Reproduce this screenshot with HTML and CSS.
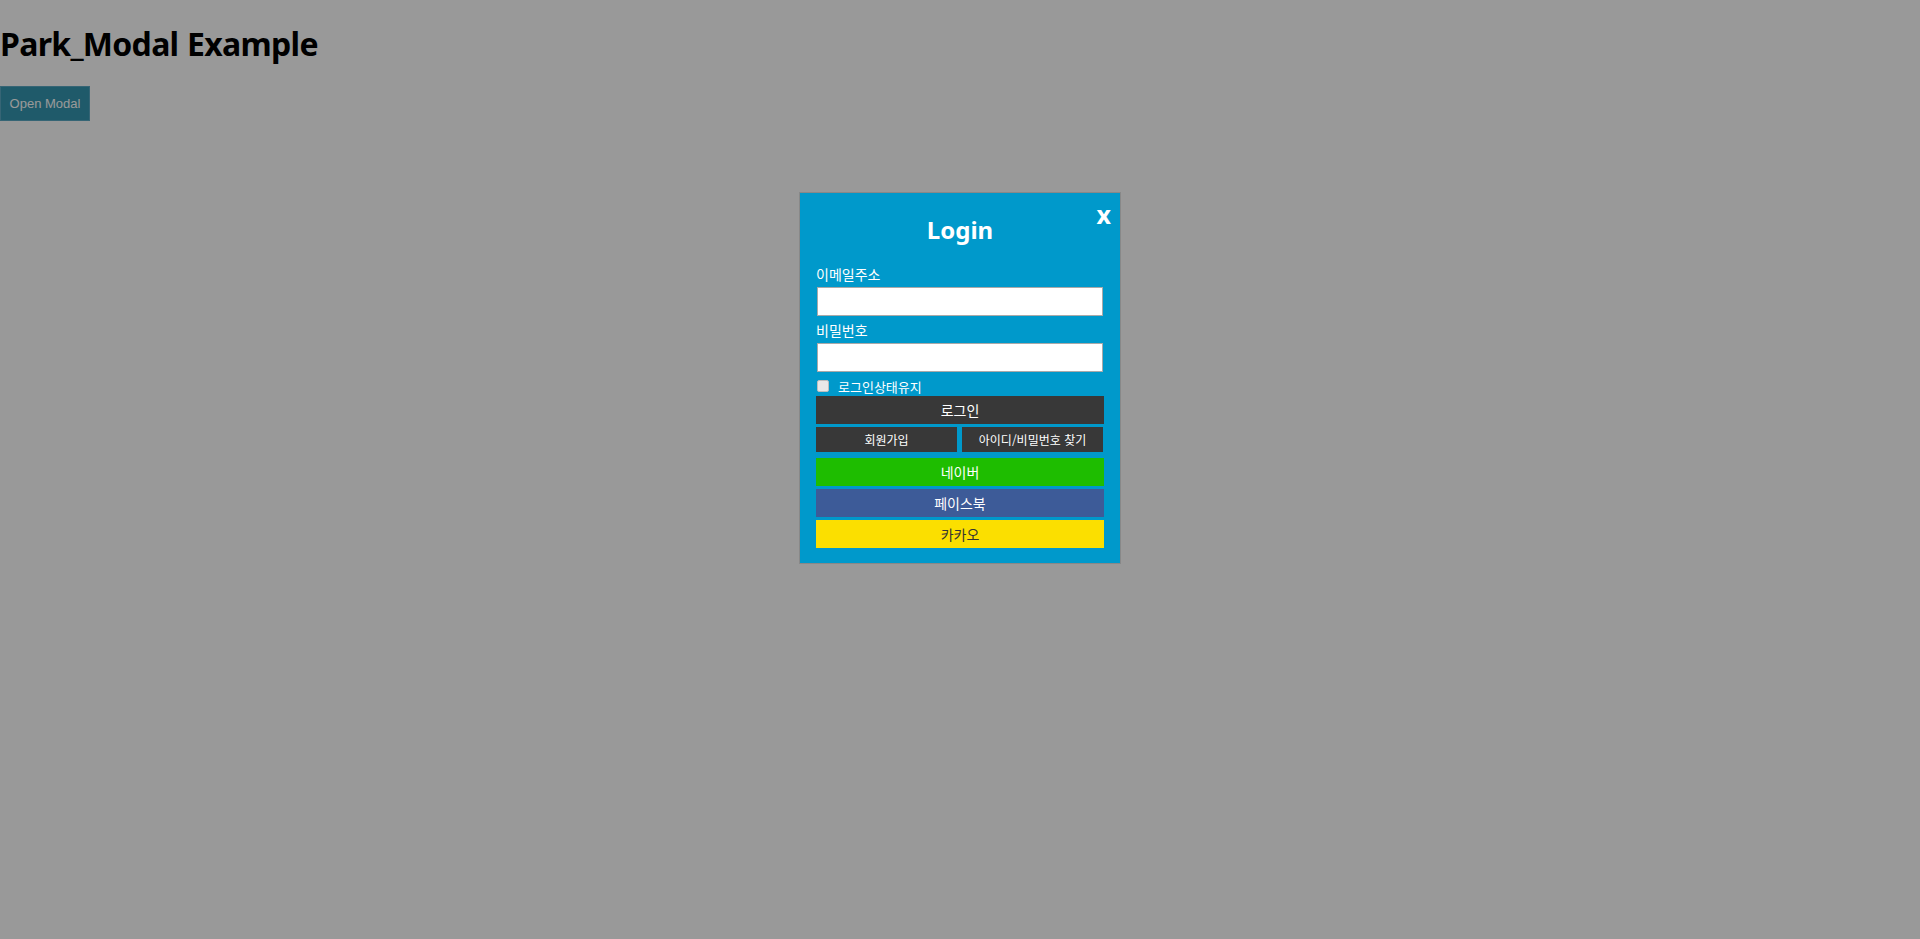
FILE: index.html
```html
<!DOCTYPE html>
<html lang="ko">
<head>
<meta charset="utf-8">
<title>Park_Modal Example</title>
<link rel="stylesheet" href="styles.css">
</head>
<body>
<h1 class="page-title">Park_Modal Example</h1>
<button class="open-btn" type="button">Open Modal</button>

<div class="overlay">
  <div class="modal">
    <span class="close">x</span>
    <h2 class="modal-title">Login</h2>
    <label class="field-label">이메일주소</label>
    <input class="field-input" type="text">
    <label class="field-label second">비밀번호</label>
    <input class="field-input" type="password">
    <div class="remember">
      <span class="checkbox"></span>
      <span class="remember-text">로그인상태유지</span>
    </div>
    <button class="btn btn-dark btn-login" type="button">로그인</button>
    <div class="btn-row">
      <button class="btn btn-dark btn-small" type="button">회원가입</button>
      <button class="btn btn-dark btn-small" type="button">아이디/비밀번호 찾기</button>
    </div>
    <button class="btn btn-naver" type="button">네이버</button>
    <button class="btn btn-facebook" type="button">페이스북</button>
    <button class="btn btn-kakao" type="button">카카오</button>
  </div>
</div>
</body>
</html>
```

FILE: styles.css
```css
html, body {
  margin: 0;
  padding: 0;
  background: #ffffff;
  font-family: "Noto Sans", "Noto Sans CJK KR", sans-serif;
}

.page-title {
  margin: 22px 0 20px 0;
  font-size: 32px;
  font-weight: 700;
  line-height: 44px;
  color: #000;
  letter-spacing: -0.7px;
  word-spacing: 1px;
}

.open-btn {
  display: block;
  width: 90px;
  height: 35px;
  margin: 0;
  padding: 0;
  background: #3497b1;
  border: 1px solid #5aa8c4;
  color: #ffffff;
  font-family: "Liberation Sans", Arial, sans-serif;
  font-size: 13px;
}

.overlay {
  position: fixed;
  inset: 0;
  background: rgba(0, 0, 0, 0.4);
  display: flex;
  flex-direction: column;
  align-items: center;
  padding-top: 192px;
  box-sizing: border-box;
}

.modal {
  position: relative;
  box-sizing: border-box;
  width: 322px;
  background: #0099cb;
  border: 1px solid #888888;
  padding: 22px 16px 15px 16px;
  display: flex;
  flex-direction: column;
  font-family: "Noto Sans CJK KR", "Noto Sans", sans-serif;
}

.close {
  position: absolute;
  top: 6px;
  right: 9px;
  color: #ffffff;
  font-family: "Noto Sans", sans-serif;
  font-weight: 700;
  font-size: 25px;
  line-height: 30px;
}

.modal-title {
  margin: 0;
  text-align: center;
  color: #ffffff;
  font-family: "Noto Sans", sans-serif;
  font-weight: 700;
  font-size: 24px;
  line-height: 30px;
}

.field-label {
  display: block;
  margin-top: 19px;
  color: #ffffff;
  font-size: 14px;
  line-height: 20px;
}

.field-label.second {
  margin-top: 4px;
}

.field-input {
  box-sizing: border-box;
  display: block;
  height: 29px;
  margin: 3px 1px 0 1px;
  border: 1px solid #a9a9a9;
  background: #ffffff;
  padding: 0 4px;
}

.remember {
  display: flex;
  align-items: center;
  height: 20px;
  margin-top: 4px;
  margin-left: 1px;
}

.checkbox {
  box-sizing: border-box;
  width: 12px;
  height: 12px;
  background: #e8e8e8;
  border: 1px solid #bdbdbd;
  border-radius: 2px;
}

.remember-text {
  margin-left: 9px;
  color: #ffffff;
  font-size: 13px;
  line-height: 20px;
  margin-top: 2px;
}

.btn {
  display: block;
  box-sizing: border-box;
  width: 100%;
  height: 28px;
  margin: 3px 0 0 0;
  padding: 0;
  border: none;
  font-family: "Noto Sans CJK KR", sans-serif;
  font-size: 14px;
  color: #ffffff;
}

.btn-dark {
  background: #383838;
}

.btn-login {
  margin-top: 0;
}

.btn-row {
  display: flex;
  gap: 5px;
  margin-top: 3px;
}

.btn-small {
  margin: 0;
  width: 141px;
  height: 25px;
  font-size: 12px;
}

.btn-naver {
  margin-top: 6px;
  background: #1ebd00;
}

.btn-facebook {
  background: #3d5b98;
}

.btn-kakao {
  background: #fbdf00;
  color: #333333;
}
```
